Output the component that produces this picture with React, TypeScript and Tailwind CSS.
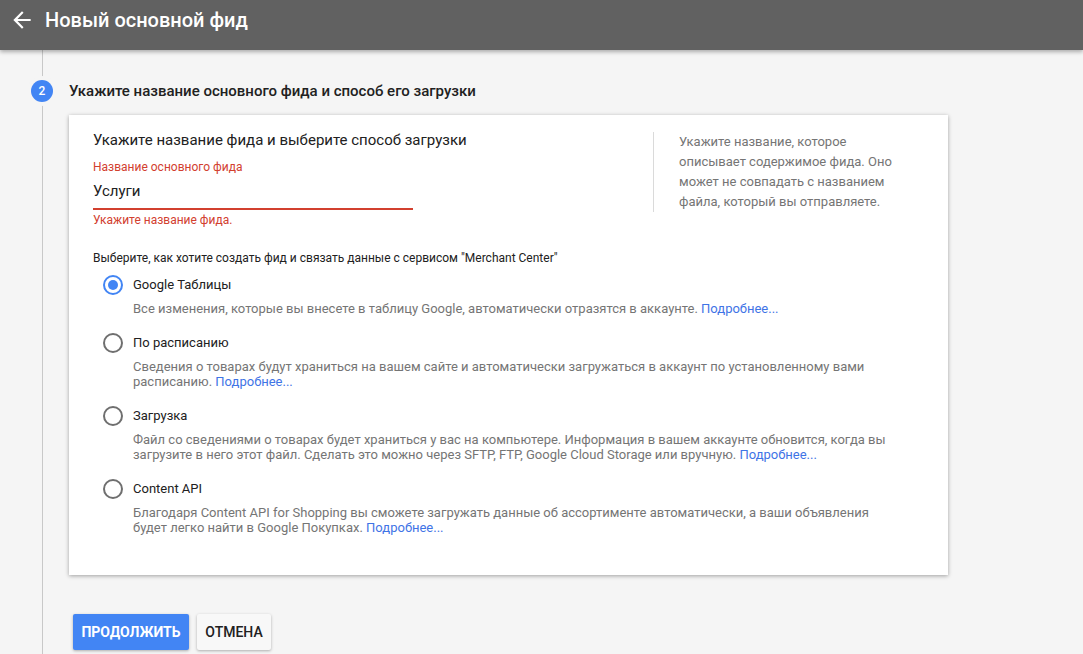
import React from "react"

type Option = {
  id: string
  label: string
  text: string
}

const options: Option[] = [
  {
    id: "sheets",
    label: "Google Таблицы",
    text: "Все изменения, которые вы внесете в таблицу Google, автоматически отразятся в аккаунте.",
  },
  {
    id: "schedule",
    label: "По расписанию",
    text: "Сведения о товарах будут храниться на вашем сайте и автоматически загружаться в аккаунт по установленному вами расписанию.",
  },
  {
    id: "upload",
    label: "Загрузка",
    text: "Файл со сведениями о товарах будет храниться у вас на компьютере. Информация в вашем аккаунте обновится, когда вы загрузите в него этот файл. Сделать это можно через SFTP, FTP, Google Cloud Storage или вручную.",
  },
  {
    id: "api",
    label: "Content API",
    text: "Благодаря Content API for Shopping вы сможете загружать данные об ассортименте автоматически, а ваши объявления будет легко найти в Google Покупках.",
  },
]

function Radio({ checked }: { checked: boolean }) {
  return (
    <div
      className={
        checked
          ? "flex h-[20px] w-[20px] shrink-0 items-center justify-center rounded-full border-2 border-[#4285f4]"
          : "flex h-[20px] w-[20px] shrink-0 items-center justify-center rounded-full border-2 border-[#6f6f6f]"
      }
    >
      {checked && <div className="h-[10px] w-[10px] rounded-full bg-[#4285f4]" />}
    </div>
  )
}

export default function App() {
  const selected = "sheets"

  return (
    <div className="min-h-[654px] bg-[#f5f5f5] font-['Roboto','Liberation_Sans',sans-serif] text-[#212121]">
      {/* шапка */}
      <header className="relative z-10 flex h-[50px] items-start bg-[#616161] pt-[7px] shadow-[0_2px_4px_rgba(0,0,0,0.3)]">
        <svg className="ml-[9px]" width="26" height="26" viewBox="0 0 24 24" fill="#ffffff">
          <path d="M20 11H7.83l5.59-5.59L12 4l-8 8 8 8 1.41-1.41L7.83 13H20v-2z" />
        </svg>
        <h1 className="ml-[10px] text-[20px] font-medium leading-[26px] text-white">Новый основной фид</h1>
      </header>

      {/* шаг 2 */}
      <div className="ml-[42px] min-h-[604px] border-l border-[#c8c8c8] pl-[26px] pt-[30px]">
        <div className="flex h-[22px] items-center">
          <div className="-ml-[38px] mr-[16px] flex h-[22px] w-[22px] items-center justify-center rounded-full bg-[#4285f4] text-[12px] font-medium text-white ring-4 ring-[#f5f5f5]">
            2
          </div>
          <span className="text-[15px] font-medium">Укажите название основного фида и способ его загрузки</span>
        </div>

        <div className="mt-[13px] w-[879px] bg-white px-[24px] pb-[40px] pt-[14px] shadow-[0_1px_4px_rgba(0,0,0,0.35)]">
          <div className="flex">
            <div className="w-[560px]">
              <div className="text-[15px] leading-[22px]">Укажите название фида и выберите способ загрузки</div>
              <div className="mt-[8px] text-[12px] leading-[16px] text-[#d2402f]">Название основного фида</div>
              <div className="w-[320px] border-b-2 border-[#d2402f] pb-[7px] pt-[6px] text-[15px] leading-[20px]">Услуги</div>
              <div className="mt-[2px] text-[12px] leading-[16px] text-[#d2402f]">Укажите название фида.</div>
            </div>
            <div className="mt-[3px] h-[80px] border-l border-[#dadada] pl-[25px] text-[13px] leading-[20px] text-[#757575]">
              <p className="w-[225px]">
                Укажите название, которое описывает содержимое фида. Оно может не совпадать с названием файла, который вы отправляете.
              </p>
            </div>
          </div>

          <div className="mt-[22px] text-[12px] leading-[16px]">
            Выберите, как хотите создать фид и связать данные с сервисом "Merchant Center"
          </div>

          <div className="ml-[10px] mt-[9px] flex flex-col gap-[17px]">
            {options.map((o) => (
              <div key={o.id}>
                <div className="flex h-[20px] items-center gap-[10px]">
                  <Radio checked={o.id === selected} />
                  <span className="text-[13px]">{o.label}</span>
                </div>
                <p className="ml-[30px] mt-[6px] max-w-[765px] text-[13px] leading-[15px] text-[#757575]">
                  {o.text} <span className="text-[#3f74e6]">Подробнее...</span>
                </p>
              </div>
            ))}
          </div>
        </div>

        <div className="ml-[4px] mt-[39px] flex gap-[8px]">
          <button className="h-[36px] w-[116px] rounded-[2px] bg-[#4285f4] text-[14px] font-bold text-white shadow-[0_1px_3px_rgba(0,0,0,0.3)]">
            ПРОДОЛЖИТЬ
          </button>
          <button className="h-[36px] w-[74px] rounded-[2px] bg-[#f8f8f8] text-[14px] font-medium text-[#212121] shadow-[0_1px_3px_rgba(0,0,0,0.3)]">
            ОТМЕНА
          </button>
        </div>
      </div>
    </div>
  )
}
